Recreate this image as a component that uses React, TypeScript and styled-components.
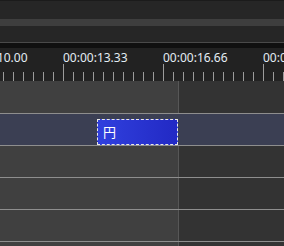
import React from 'react';
import styled, { createGlobalStyle } from 'styled-components';

const GlobalStyle = createGlobalStyle`
  html, body {
    margin: 0;
    padding: 0;
    background: #262626;
  }
`;

const Page = styled.div`
  width: 284px;
  height: 246px;
  overflow: hidden;
  display: flex;
  flex-direction: column;
  background: #262626;
  font-family: "Noto Sans", "Noto Sans CJK JP", sans-serif;
`;

const TopPanel = styled.div`
  height: 42px;
  border-top: 1px solid #1b1b1b;
  padding-top: 18px;
  box-sizing: border-box;
  flex: none;
`;

const ScrollBand = styled.div`
  height: 7px;
  background: #3e3e3e;
`;

const Divider = styled.div`
  height: 5px;
  border-top: 1px solid #4a4a4a;
  background: #101010;
  flex: none;
`;

const Ruler = styled.div`
  position: relative;
  height: 33px;
  background: #222222;
  flex: none;
`;

const TickLayer = styled.svg`
  position: absolute;
  left: 0;
  bottom: 0;
`;

const Label = styled.span`
  position: absolute;
  top: 3px;
  font-size: 12px;
  line-height: 14px;
  color: #e4edf4;
  white-space: nowrap;
`;

const Tracks = styled.div`
  display: flex;
  flex-direction: column;
  flex: 1;
`;

const Row = styled.div<{ $h: number }>`
  display: flex;
  height: ${p => p.$h}px;
  border-bottom: 1px solid #8e8e8e;
  flex: none;
`;

const LeftPart = styled.div`
  width: 178px;
  background: #404040;
  border-right: 1px solid #575757;
  flex: none;
`;

const RightPart = styled.div`
  flex: 1;
  background: #333333;
`;

const SelectedRow = styled.div`
  display: flex;
  height: 32px;
  padding: 5px 0 0 97px;
  box-sizing: border-box;
  background: #3b3f53;
  border-bottom: 1px solid #8e8e8e;
  flex: none;
`;

const Clip = styled.div`
  width: 81px;
  height: 26px;
  box-sizing: border-box;
  border: 1px dashed #e8e8e8;
  background: linear-gradient(90deg, #3040de, #2229c4);
  color: #ffffff;
  font-family: "Noto Sans CJK JP", sans-serif;
  font-size: 13px;
  line-height: 14px;
  padding: 5px 0 0 5px;
`;

const labels = [
  { x: -37, text: '00:00:10.00' },
  { x: 63, text: '00:00:13.33' },
  { x: 163, text: '00:00:16.66' },
  { x: 263, text: '00:00:20.00' },
];

const ticks = Array.from({ length: 29 }, (_, i) => 3 + i * 10);

const PlainRow: React.FC<{ h: number }> = ({ h }) => (
  <Row $h={h}>
    <LeftPart />
    <RightPart />
  </Row>
);

const App: React.FC = () => {
  return (
    <Page>
      <GlobalStyle />
      <TopPanel>
        <ScrollBand />
      </TopPanel>
      <Divider />
      <Ruler>
        {labels.map(l => (
          <Label key={l.text} style={{ left: l.x }}>{l.text}</Label>
        ))}
        <TickLayer width="284" height="17">
          {ticks.map(x => {
            const major = (x - 63) % 100 === 0;
            return (
              <line
                key={x}
                x1={x + 0.5}
                x2={x + 0.5}
                y1={major ? 0 : 8}
                y2={17}
                stroke="#9c9c9c"
                strokeWidth="1"
              />
            );
          })}
        </TickLayer>
      </Ruler>
      <Tracks>
        <PlainRow h={32} />
        <SelectedRow>
          <Clip>円</Clip>
        </SelectedRow>
        <PlainRow h={31} />
        <PlainRow h={31} />
        <PlainRow h={31} />
        <PlainRow h={31} />
      </Tracks>
    </Page>
  );
};

export default App;
